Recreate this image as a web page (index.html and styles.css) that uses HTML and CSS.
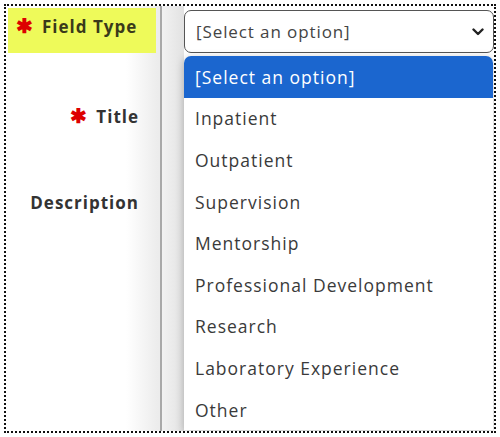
FILE: index.html
```html
<!DOCTYPE html>
<html>
<head>
<meta charset="utf-8">
<link rel="stylesheet" href="styles.css">
</head>
<body>
<div class="frame">
  <div class="labels">
    <div class="label label-hl"><span class="req">✱</span>Field Type</div>
    <div class="label label-title"><span class="req">✱</span>Title</div>
    <div class="label label-desc">Description</div>
  </div>
  <div class="divider"></div>
  <div class="fields">
    <div class="select">
      <span class="select-text">[Select an option]</span>
      <svg class="chev" width="12" height="8" viewBox="0 0 12 8"><path d="M1.5 1.5 L6 6 L10.5 1.5" fill="none" stroke="#222" stroke-width="2.4" stroke-linecap="round" stroke-linejoin="round"/></svg>
    </div>
    <ul class="menu">
      <li class="opt opt-active">[Select an option]</li>
      <li class="opt">Inpatient</li>
      <li class="opt">Outpatient</li>
      <li class="opt">Supervision</li>
      <li class="opt">Mentorship</li>
      <li class="opt">Professional Development</li>
      <li class="opt">Research</li>
      <li class="opt">Laboratory Experience</li>
      <li class="opt">Other</li>
    </ul>
  </div>
</div>
</body>
</html>
```
FILE: styles.css
```css
html, body {
  margin: 0;
  padding: 0;
  background: #fff;
}
body {
  font-family: "Open Sans", "Liberation Sans", sans-serif;
  color: #333;
}
.frame {
  margin: 4px;
  width: 488px;
  height: 425px;
  border: 2px dotted #111;
  display: flex;
  overflow: hidden;
  position: relative;
}
.labels {
  width: 152px;
  padding: 2px 0 0 2px;
  display: flex;
  flex-direction: column;
  background: linear-gradient(to right, #fff 0, #fff 120px, #ececec 152px);
}
.label {
  font-weight: 700;
  font-size: 17px;
  letter-spacing: 1px;
  text-align: right;
  padding-right: 21px;
  color: #333;
}
.label-hl {
  background: #eefa5a;
  height: 45px;
  width: 148px;
  box-sizing: border-box;
  text-align: left;
  padding: 7px 0 0 8px;
  color: #3a3a1a;
}
.req {
  color: #d00;
  font-size: 20px;
  line-height: 1;
  margin-right: 9px;
  letter-spacing: 0;
}
.label-title {
  margin-top: 52px;
}
.label-desc {
  margin-top: 63px;
}
.divider {
  width: 2px;
  background: #a9a9a9;
  flex: none;
}
.fields {
  flex: 1;
  position: relative;
  padding: 4px 0 0 22px;
  background: linear-gradient(to right, #f2f2f2 0, #e2e2e2 22px, #fff 22px);
}
.select {
  width: 310px;
  height: 43px;
  box-sizing: border-box;
  border: 1px solid #555;
  border-radius: 7px;
  background: #fff;
  display: flex;
  align-items: center;
  justify-content: space-between;
  padding: 0 9px 0 11px;
  font-size: 17px;
  letter-spacing: 0.9px;
  color: #444;
}
.chev {
  display: block;
}
.menu {
  position: absolute;
  left: 22px;
  top: 50px;
  width: 309px;
  margin: 0;
  padding: 0;
  list-style: none;
  background: #fff;
  border-radius: 7px 7px 0 0;
  box-shadow: 0 2px 8px rgba(0,0,0,0.25);
  overflow: hidden;
}
.opt {
  height: 41.6px;
  display: flex;
  align-items: center;
  padding-left: 11px;
  font-size: 17.5px;
  letter-spacing: 1px;
  color: #3a3a3a;
}
.opt-active {
  background: #1b66cf;
  color: #fff;
}
```
